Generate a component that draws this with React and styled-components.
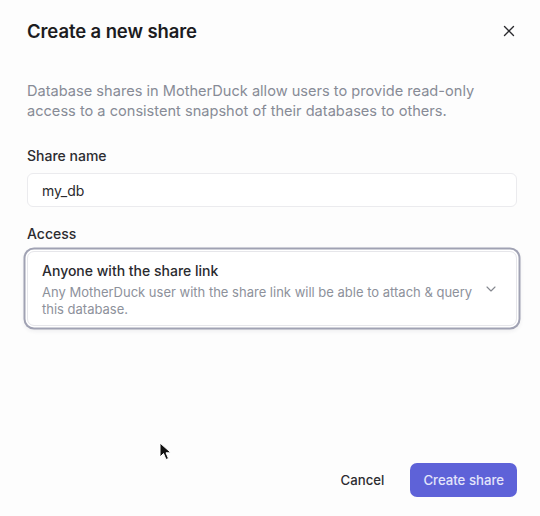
import { X, ChevronDown } from "lucide-react";
import styled, { createGlobalStyle } from "styled-components";

const GlobalStyle = createGlobalStyle`
  * { box-sizing: border-box; }
  body {
    margin: 0;
    background: #fdfdfd;
    font-family: Inter, "Noto Sans", sans-serif;
    color: #1f1f22;
  }
`;

const Dialog = styled.div`
  position: relative;
  width: 540px;
  height: 516px;
  display: flex;
  flex-direction: column;
  padding: 20px 23px 19px 27px;
  background: #fdfdfd;
`;

const Header = styled.div`
  display: flex;
  align-items: center;
  justify-content: space-between;
  height: 22px;
`;

const Title = styled.h2`
  margin: 0;
  font-size: 18.5px;
  font-weight: 600;
  letter-spacing: -0.1px;
  color: #1c1c1f;
`;

const CloseButton = styled.button`
  display: flex;
  align-items: center;
  justify-content: center;
  width: 18px;
  height: 18px;
  margin-right: -1px;
  padding: 0;
  border: none;
  background: none;
  color: #2a2a2e;
`;

const Description = styled.p`
  margin: 39px 0 0;
  font-size: 14.6px;
  line-height: 20px;
  color: #878b96;
`;

const Label = styled.label`
  display: block;
  margin-top: ${(p) => p.$gap}px;
  font-size: 14px;
  line-height: 20px;
  font-weight: 500;
  color: #2c2c30;
`;

const Input = styled.div`
  margin-top: 7px;
  height: 34px;
  display: flex;
  align-items: center;
  padding: 0 14px;
  border: 1px solid #ebebee;
  border-radius: 6px;
  background: #fff;
  font-size: 14px;
  color: #2a2a2e;
`;

const Select = styled.div`
  margin-top: 7px;
  height: 75px;
  display: flex;
  align-items: center;
  padding: 0 17px 0 14px;
  border: 1px solid #e6e6ea;
  border-radius: 7px;
  background: #fff;
  box-shadow: 0 0 0 1.5px #fff, 0 0 0 3.5px #a0a2b3,
    0 2px 4px 3px rgba(40, 40, 60, 0.08);
`;

const SelectText = styled.div`
  flex: 1;
  padding-top: 2px;
`;

const OptionTitle = styled.div`
  font-size: 14px;
  line-height: 18px;
  font-weight: 500;
  color: #2a2a2e;
`;

const OptionHint = styled.div`
  margin-top: 4px;
  font-size: 13px;
  line-height: 17px;
  color: #8d919b;
`;

const Footer = styled.div`
  margin-top: auto;
  display: flex;
  justify-content: flex-end;
  align-items: center;
  gap: 26px;
`;

const Button = styled.button`
  height: 34px;
  padding: 0 ${(p) => (p.$primary ? "13px" : "0")};
  border: none;
  border-radius: 7px;
  font-family: inherit;
  font-size: 13.2px;
  font-weight: 500;
  background: ${(p) => (p.$primary ? "#5e62d8" : "transparent")};
  color: ${(p) => (p.$primary ? "#e4e5fb" : "#2c2c30")};
`;

const Cursor = styled.svg`
  position: absolute;
  left: 159px;
  top: 442px;
`;

export default function App() {
  return (
    <>
      <GlobalStyle />
      <Dialog>
        <Header>
          <Title>Create a new share</Title>
          <CloseButton aria-label="Close">
            <X size={18} strokeWidth={1.8} />
          </CloseButton>
        </Header>
        <Description>
          Database shares in MotherDuck allow users to provide read-only
          access to a consistent snapshot of their databases to others.
        </Description>
        <Label $gap={25}>Share name</Label>
        <Input>my_db</Input>
        <Label $gap={17}>Access</Label>
        <Select>
          <SelectText>
            <OptionTitle>Anyone with the share link</OptionTitle>
            <OptionHint>
              Any MotherDuck user with the share link will be able to attach
              &amp; query this database.
            </OptionHint>
          </SelectText>
          <ChevronDown size={16} strokeWidth={1.7} color="#85888f" />
        </Select>
        <Footer>
          <Button>Cancel</Button>
          <Button $primary>Create share</Button>
        </Footer>
        <Cursor width="14" height="20" viewBox="0 0 14 20">
          <path
            d="M1 1 L1 15 L4.5 11.5 L7 17.5 L9.5 16.5 L7 10.8 L12 10.8 Z"
            fill="#111"
            stroke="#fff"
            strokeWidth="1"
          />
        </Cursor>
      </Dialog>
    </>
  );
}
